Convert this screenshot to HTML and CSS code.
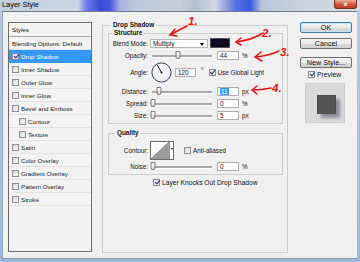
FILE: index.html
```html
<!DOCTYPE html>
<html lang="en">
<head>
    <meta charset="UTF-8">
    <title>Layer Style</title>
    <link rel="stylesheet" href="styles.css">
</head>
<body>
<div class="window">

    <div class="titlebar">
        <span class="title">Layer Style</span>
        <span class="close">x</span>
    </div>

    <div class="client">

        <!-- left list of effects -->
        <div class="styles-list">
            <div class="list-head">Styles</div>
            <div class="item">Blending Options: Default</div>
            <div class="item selected"><span class="cb on"></span>Drop Shadow</div>
            <div class="item"><span class="cb"></span>Inner Shadow</div>
            <div class="item"><span class="cb"></span>Outer Glow</div>
            <div class="item"><span class="cb"></span>Inner Glow</div>
            <div class="item"><span class="cb"></span>Bevel and Emboss</div>
            <div class="item sub"><span class="cb"></span>Contour</div>
            <div class="item sub"><span class="cb"></span>Texture</div>
            <div class="item"><span class="cb"></span>Satin</div>
            <div class="item"><span class="cb"></span>Color Overlay</div>
            <div class="item"><span class="cb"></span>Gradient Overlay</div>
            <div class="item"><span class="cb"></span>Pattern Overlay</div>
            <div class="item"><span class="cb"></span>Stroke</div>
        </div>

        <!-- drop shadow settings -->
        <fieldset class="group main">
            <legend>Drop Shadow</legend>

            <fieldset class="group structure">
                <legend>Structure</legend>
                <div class="row">
                    <span class="lbl">Blend Mode:</span>
                    <div class="select">Multiply<span class="arrow"></span></div>
                    <div class="swatch"></div>
                </div>
                <div class="row">
                    <span class="lbl">Opacity:</span>
                    <div class="slider"><div class="track"><span class="thumb" style="left:44%"></span></div></div>
                    <div class="field">44</div><span class="unit">%</span>
                </div>
                <div class="row tall">
                    <span class="lbl">Angle:</span>
                    <svg class="dial" width="21" height="21" viewBox="0 0 21 21">
                        <defs>
                            <radialGradient id="dialfill" cx="40%" cy="35%" r="70%">
                                <stop offset="0" stop-color="#ffffff"/>
                                <stop offset="1" stop-color="#dfe6ee"/>
                            </radialGradient>
                        </defs>
                        <circle cx="10.5" cy="10.5" r="9.6" fill="url(#dialfill)" stroke="#34465a" stroke-width="1"/>
                        <line x1="10.5" y1="10.5" x2="6.3" y2="3.2" stroke="#111" stroke-width="1"/>
                        <circle cx="10.5" cy="10.5" r="1" fill="#111"/>
                    </svg>
                    <div class="field narrow">120</div>
                    <span class="deg">°</span>
                    <span class="check"><span class="cb on"></span>Use Global Light</span>
                </div>
                <div class="row gap">
                    <span class="lbl">Distance:</span>
                    <div class="slider"><div class="track"><span class="thumb" style="left:10%"></span></div></div>
                    <div class="field"><span class="sel">11</span></div><span class="unit">px</span>
                </div>
                <div class="row">
                    <span class="lbl">Spread:</span>
                    <div class="slider"><div class="track"><span class="thumb" style="left:0%"></span></div></div>
                    <div class="field">0</div><span class="unit">%</span>
                </div>
                <div class="row">
                    <span class="lbl">Size:</span>
                    <div class="slider"><div class="track"><span class="thumb" style="left:0%"></span></div></div>
                    <div class="field">5</div><span class="unit">px</span>
                </div>
            </fieldset>

            <fieldset class="group quality">
                <legend>Quality</legend>
                <div class="row contour-row">
                    <span class="lbl">Contour:</span>
                    <div class="contour">
                        <svg width="18" height="17" viewBox="0 0 18 17">
                            <rect width="18" height="17" fill="#fff"/>
                            <polygon points="0,17 18,0 18,17" fill="#9c9c9c"/>
                            <line x1="0" y1="17" x2="18" y2="0" stroke="#6c6c6c" stroke-width="0.8"/>
                        </svg>
                        <span class="drop"><span class="arrow"></span></span>
                    </div>
                    <span class="check aa"><span class="cb"></span>Anti-aliased</span>
                </div>
                <div class="row">
                    <span class="lbl">Noise:</span>
                    <div class="slider"><div class="track"><span class="thumb" style="left:0%"></span></div></div>
                    <div class="field">0</div><span class="unit">%</span>
                </div>
            </fieldset>

            <div class="knock"><span class="cb on"></span>Layer Knocks Out Drop Shadow</div>
        </fieldset>

        <!-- buttons and preview -->
        <div class="side">
            <div class="btn default">OK</div>
            <div class="btn cancel">Cancel</div>
            <div class="btn newstyle">New Style...</div>
            <div class="preview-check"><span class="cb on"></span>Preview</div>
            <div class="preview"><div class="sample"></div></div>
        </div>

    </div>

    <!-- red hand drawn notes on top of the screenshot -->
    <svg class="marks" width="360" height="262" viewBox="0 0 360 262">
        <g fill="none" stroke="#f01010" stroke-width="1.5" stroke-linecap="round" stroke-linejoin="round">
            <path d="M187 26 Q179 30 170 35"/>
            <path d="M175 29 L170 35 L177 36"/>
            <path d="M263 33 Q252 40 236 42"/>
            <path d="M241 38 L236 42 L241 45"/>
            <path d="M279 51 Q268 56 255 57"/>
            <path d="M261 52 L255 57 L262 61"/>
            <path d="M271 88 Q262 90 252 90"/>
            <path d="M257 86 L252 90 L257 94"/>
        </g>
        <g class="notes" fill="#f01010">
            <text x="188" y="25">1.</text>
            <text x="262" y="37">2.</text>
            <text x="280" y="56">3.</text>
            <text x="272" y="92">4.</text>
        </g>
    </svg>

</div>
</body>
</html>
```

FILE: styles.css
```css
/* reset */
*{
    margin: 0;
    box-sizing: border-box;
}

body{
    margin: 0;
    font-family: "Liberation Sans", Arial, sans-serif;
    font-size: 6.3px;
    color: #111;
}

/* window frame */
.window{
    position: relative;
    width: 360px;
    height: 262px;
    display: flex;
    flex-direction: column;
    background: linear-gradient(180deg, #b9c9dc, #9db8d6);
    overflow: hidden;
}

.titlebar{
    height: 11px;
    flex: none;
    display: flex;
    justify-content: space-between;
    align-items: flex-start;
    padding-left: 2px;
    background: linear-gradient(90deg, #c2cfe0 0, #cbd6e5 78px, #6f80ee 86px, #3a4ad8 100px, #4555de 110px,
                #a5b2e2 120px, #bcc8d8 135px, #c6d0dc 180px, #b3c0d2 195px, #d2dae4 215px, #5570e0 236px,
                #3957e2 250px, #b8c6da 262px, #c8d2de 300px, #d0d8e2 332px);
}

.title{
    font-size: 7.4px;
    line-height: 10px;
    color: #000;
}

.close{
    width: 23px;
    height: 9px;
    margin-right: 3px;
    border: 1px solid #7a2a1a;
    border-top: 0;
    border-radius: 0 0 3px 3px;
    background: linear-gradient(180deg, #eab0a0, #d2553a 55%, #c0401f);
    color: #fff;
    font-family: "DejaVu Sans", sans-serif;
    font-weight: bold;
    font-size: 6px;
    line-height: 7px;
    text-align: center;
}

.client{
    flex: 1;
    margin: 0 3px 3px 2px;
    display: flex;
    align-items: flex-start;
    padding: 10px 0 0 6px;
    background: #f0f0f0;
    border-top: 1px solid #6d7b8b;
    border-left: 1px solid #93a3b5;
    border-bottom: 1px solid #8a98a8;
}

/* styles list */
.styles-list{
    flex: none;
    width: 84px;
    height: 230px;
    border: 1px solid #6c6c6c;
    background: #f3f3f3;
    margin-left: -1px;
    font-size: 6.2px;
}

.list-head{
    height: 14px;
    line-height: 13px;
    padding-left: 3px;
    border-bottom: 1px solid #a9a9a9;
}

.item{
    height: 13px;
    display: flex;
    align-items: center;
    gap: 2px;
    padding-left: 3px;
    border-bottom: 1px solid #e1e1e1;
    color: #222;
}

.item.sub{
    padding-left: 10px;
}

.item.selected{
    background: #3399ff;
    color: #fff;
    border-bottom-color: #3399ff;
}

/* checkbox */
.cb{
    position: relative;
    flex: none;
    width: 7px;
    height: 7px;
    border: 1px solid #8e8f8f;
    background: linear-gradient(135deg, #d8d8d8, #f8f8f8);
}

.cb.on::after{
    content: "";
    position: absolute;
    left: 1.6px;
    top: -0.4px;
    width: 2px;
    height: 4px;
    border: solid #23345e;
    border-width: 0 1.3px 1.3px 0;
    transform: rotate(40deg);
}

/* group boxes */
.group{
    border: 1px solid #cdcdcd;
    padding: 0;
    margin: 0;
    min-width: 0;
}

.group legend{
    font-weight: bold;
    font-size: 6.4px;
    line-height: 8px;
    padding: 0 2px;
    margin-left: 3px;
}

.main{
    flex: none;
    width: 186px;
    height: 232px;
    margin: -1px 0 0 10px;
    padding: 0 4px 0 5px;
}

.structure{
    padding-bottom: 2px;
}

.quality{
    margin-top: 5px;
    padding-bottom: 2px;
}

.quality legend{
    margin-left: 6px;
}

.row{
    display: flex;
    align-items: center;
    height: 12px;
}

.row.tall{
    height: 22px;
}

.row.gap{
    margin-top: 2px;
}

.lbl{
    flex: none;
    width: 40px;
    padding-right: 1px;
    text-align: right;
}

.select{
    position: relative;
    width: 58px;
    height: 9px;
    margin-left: 1px;
    padding-left: 2px;
    line-height: 8px;
    background: #fff;
    border: 1px solid #b5b5b5;
}

.arrow{
    position: absolute;
    right: 3px;
    top: 3px;
    border-left: 2px solid transparent;
    border-right: 2px solid transparent;
    border-top: 3px solid #000;
}

.swatch{
    width: 20px;
    height: 10px;
    margin-left: 2px;
    background: #0b0c21;
    border: 1px solid #555;
}

/* sliders */
.slider{
    width: 63px;
    height: 9px;
    margin-left: 1px;
    padding: 0 3px;
}

.track{
    position: relative;
    height: 9px;
}

.track::before{
    content: "";
    position: absolute;
    left: -1px;
    right: -2px;
    top: 4px;
    height: 2px;
    background: #a9a9a9;
    border-bottom: 1px solid #fff;
}

.thumb{
    position: absolute;
    top: 0;
    width: 5px;
    height: 8px;
    transform: translateX(-50%);
    border: 1px solid #7d7d7d;
    border-radius: 1px 1px 3px 3px;
    background: linear-gradient(180deg, #fbfbfb, #d9d9d9);
}

.field{
    width: 22px;
    height: 9px;
    margin-left: 4px;
    padding-left: 2px;
    line-height: 7px;
    background: #fff;
    border: 1px solid #abadb3;
}

.field.narrow{
    width: 21px;
    margin-left: 3px;
}

.sel{
    background: #3399ff;
    color: #fff;
    padding: 0 1px;
}

.unit{
    margin-left: 3px;
}

.dial{
    flex: none;
    margin-left: 2px;
}

.deg{
    margin-left: 5px;
    margin-top: -3px;
}

.check{
    display: flex;
    align-items: center;
    gap: 2px;
    margin-left: 5px;
}

/* contour picker */
.contour-row{
    height: 20px;
    margin-top: 3px;
}

.contour{
    display: flex;
    width: 24px;
    height: 19px;
    margin-left: 1px;
    border: 1px solid #6a6a6a;
    background: #fff;
}

.contour svg{
    display: block;
}

.drop{
    position: relative;
    flex: 1;
    border-left: 1px solid #9a9a9a;
}

.drop .arrow{
    right: 0;
    top: 6px;
    border-left-width: 1.5px;
    border-right-width: 1.5px;
    border-top-width: 2px;
}

.check.aa{
    margin-left: 10px;
}

.knock{
    display: flex;
    align-items: center;
    gap: 2px;
    height: 12px;
    margin-top: 1px;
    padding-left: 45px;
    font-size: 6.7px;
}

/* right column */
.side{
    flex: none;
    width: 52px;
    margin-left: 12px;
    display: flex;
    flex-direction: column;
}

.btn{
    height: 11px;
    line-height: 9px;
    font-size: 7.2px;
    text-align: center;
    color: #111;
    border: 1px solid #707070;
    border-radius: 2px;
    background: linear-gradient(180deg, #f4f4f4 0, #ebebeb 50%, #dcdcdc 51%, #cfcfcf);
}

.btn.default{
    border-color: #3c7fb1;
    box-shadow: inset 0 0 0 1px #bfe4f8;
}

.btn.cancel{
    margin-top: 5px;
}

.btn.newstyle{
    margin-top: 8px;
}

.preview-check{
    display: flex;
    align-items: center;
    gap: 2px;
    height: 10px;
    margin-top: 1px;
    padding-left: 8px;
    font-size: 6.8px;
}

.preview{
    width: 40px;
    height: 40px;
    margin: 4px 0 0 5px;
    padding: 11px 0 0 11px;
    background: #d9d9d9;
    border: 1px solid #cfcfcf;
}

.sample{
    width: 19px;
    height: 19px;
    background: #555;
    border: 1px solid #4a4a4a;
    box-shadow: 4px 4px 3px #8d8c99;
}

/* annotation layer */
.marks{
    position: absolute;
    left: 0;
    top: 0;
    pointer-events: none;
}

.notes text{
    font-family: "Liberation Sans", Arial, sans-serif;
    font-style: italic;
    font-weight: bold;
    font-size: 11.5px;
}
```
